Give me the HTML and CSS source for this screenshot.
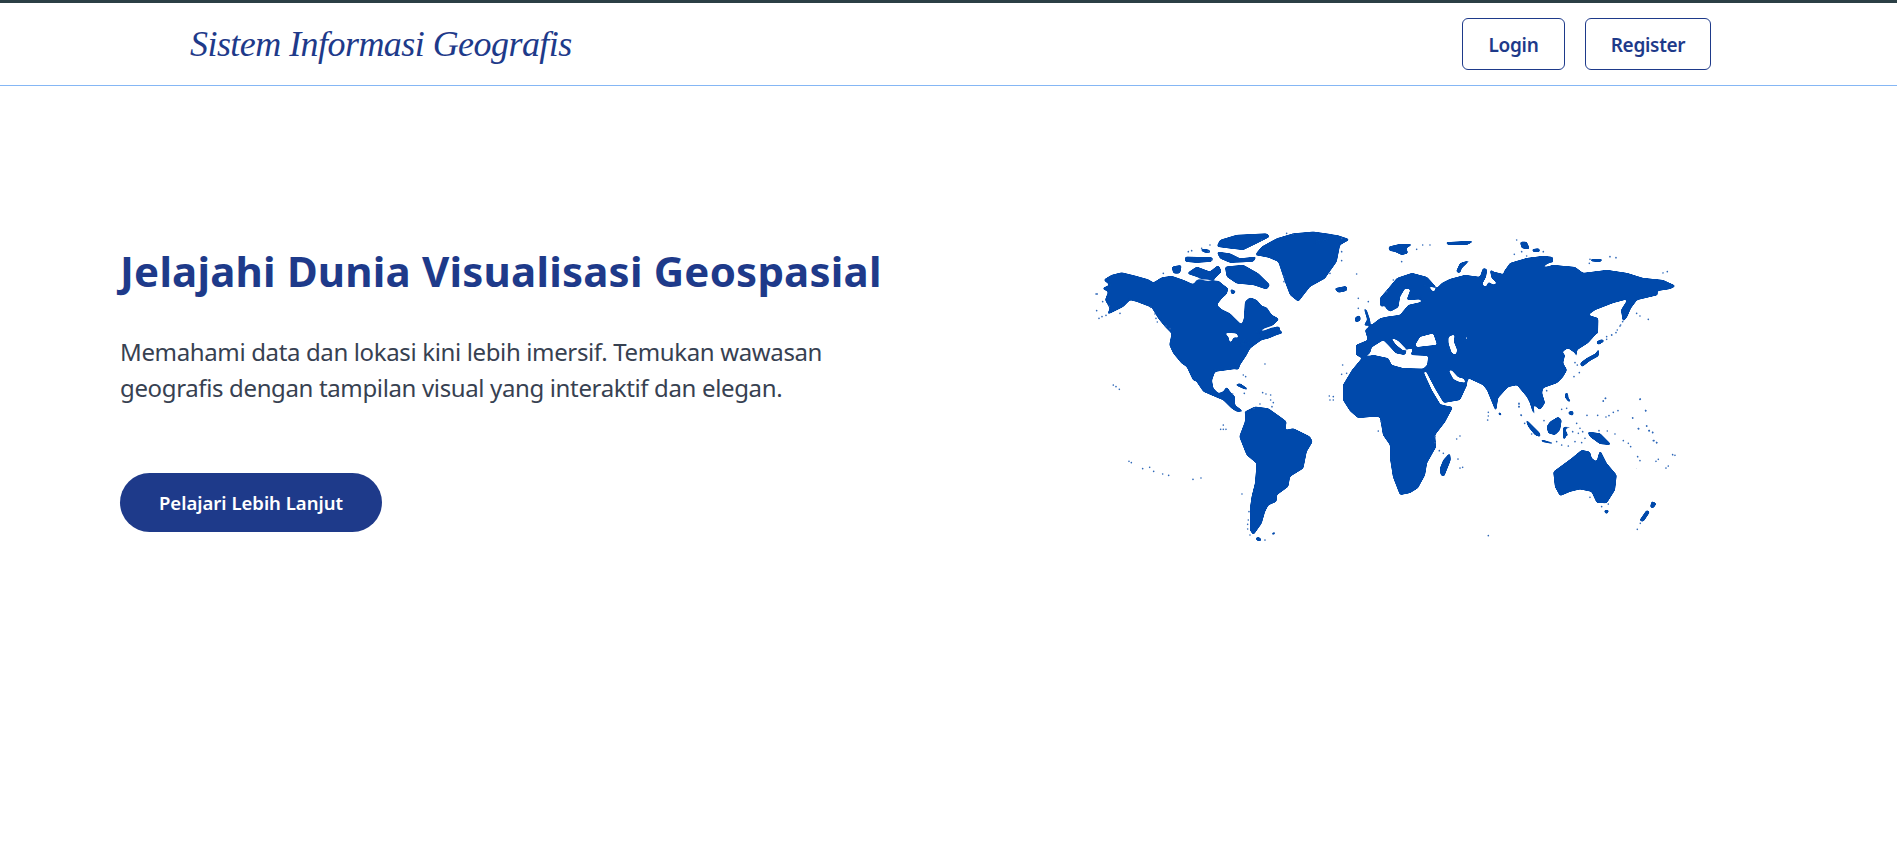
FILE: index.html
```html
<!DOCTYPE html>
<html lang="id">
<head>
<meta charset="utf-8">
<title>Sistem Informasi Geografis</title>
<link rel="stylesheet" href="styles.css">
</head>
<body>
<header class="navbar">
  <a class="brand" href="#">Sistem Informasi Geografis</a>
  <nav class="nav-actions">
    <a class="nav-btn" href="#">Login</a>
    <a class="nav-btn" href="#">Register</a>
  </nav>
</header>
<main class="hero">
  <section class="hero-copy">
    <h1 class="hero-title">Jelajahi Dunia Visualisasi Geospasial</h1>
    <p class="hero-text">Memahami data dan lokasi kini lebih imersif. Temukan wawasan geografis dengan tampilan visual yang interaktif dan elegan.</p>
    <a class="hero-btn" href="#">Pelajari Lebih Lanjut</a>
  </section>
  <svg class="world-map" viewBox="1090 225 600 325" role="img" aria-label="Peta dunia">
    <defs>
      <filter id="coast" x="1080" y="215" width="620" height="345" filterUnits="userSpaceOnUse">
        <feGaussianBlur stdDeviation="0.9"/>
        <feComponentTransfer><feFuncA type="linear" slope="6" intercept="-2.1"/></feComponentTransfer>
      </filter>
      <mask id="seas" maskUnits="userSpaceOnUse" x="1080" y="215" width="620" height="345">
        <rect class="mask-open" x="1080" y="215" width="620" height="345"/>
        <g transform="translate(1080 220) scale(.3333)">
          <path class="mask-cut" d="M432 338 470 340 478 355 462 352 450 372 445 350ZM470 377 500 360 503 363 475 378ZM705 65 770 45 745 58 710 68Z"/>
        </g>
        <g transform="translate(1320 290) scale(.3333)">
          <path class="mask-cut" d="M122 205 150 190 155 172 190 150 205 165 228 190 255 195 262 178 280 175 272 195 325 197 322 225 310 236 250 235 215 225 205 205 160 195ZM210 140 235 152 262 180 250 182 228 165ZM285 165 300 140 340 130 352 165 320 168 290 172ZM385 140 405 132 402 155 412 180 408 195 395 190 385 160ZM436 140 444 138 442 150 436 150ZM310 245 318 243 345 295 372 340 362 345 335 300ZM385 240 395 240 415 262 430 265 440 280 415 275 400 268Z"/>
        </g>
        <g transform="translate(1380 220) scale(.3333)">
          <path class="mask-cut" d="M75 205 92 208 80 240 120 238 128 245 85 255 60 285 20 290 15 262 30 275 55 262 60 230ZM135 195 170 205 160 217 150 205ZM305 195 318 170 322 145 330 150 335 175 352 190 340 195 325 185 320 200ZM335 150 365 150 375 165 360 160 340 155ZM485 140 515 125 520 135 495 142ZM0 265 15 255 22 290 0 295ZM655 290 661 290 660 345 654 345Z"/>
        </g>
      </mask>
    </defs>
    <g filter="url(#coast)">
      <g mask="url(#seas)">
        <!-- Afro-Eurasia, page coordinates -->
        <path class="land" d="M1362 358 1352 370 1343 385 1343 400 1350 411 1358 418 1370 417 1380 417 1383 435 1390 445 1390 458 1393 477 1400 495 1410 493 1418 488 1425 475 1427 463 1436 447 1435 435 1445 422 1453 407 1442 405 1443 403 1460 400 1467 385 1468 378 1483 385 1487 390 1496 412 1498 398 1508 387 1517 385 1527 397 1530 403 1532 410 1538 424 1535 415 1533 404 1540 410 1545 403 1542 393 1543 388 1557 383 1563 377 1567 370 1563 363 1565 355 1562 352 1568 348 1575 353 1577 359 1577 350 1588 343 1597 333 1600 337 1599 320 1598 318 1588 315 1595 310 1613 303 1628 299 1621 310 1623 322 1627 317 1631 308 1637 300 1658 295 1657 291 1670 289 1676 286 1663 280 1643 278 1627 273 1607 270 1583 273 1575 267 1553 265 1553 257 1543 256 1527 258 1510 263 1503 273 1497 270 1490 270 1483 268 1480 277 1465 275 1450 279 1442 283 1437 288 1427 277 1412 273 1397 278 1387 290 1380 298 1380 305 1387 313 1378 320 1365 330 1368 340 1356 345 1356 355Z"/>
        <!-- North America -->
        <g transform="translate(1080 220) scale(.3333)">
          <path class="land" d="M70 180 95 165 125 157 165 167 205 178 220 188 245 172 275 168 310 180 340 193 352 178 385 185 415 182 430 195 445 205 440 222 425 235 410 255 425 268 450 280 468 298 485 315 492 295 495 245 510 232 530 240 545 258 560 262 575 285 598 297 580 315 550 325 530 340 580 322 612 338 590 345 565 355 545 360 530 370 510 385 500 405 480 435 475 450 465 447 405 455 395 482 340 482 320 440 305 430 280 400 268 375 275 340 255 320 235 295 215 262 170 245 150 240 130 260 100 275 80 285 90 265 75 240 85 215 65 205 90 195Z"/>
          <path class="land" d="M525 105 545 80 590 55 640 40 700 35 770 45 810 58 780 75 770 125 745 160 735 175 690 200 655 245 630 225 615 185 595 125 565 112Z"/>
          <path class="land" d="M762 205 800 198 802 212 775 218ZM420 60 470 45 560 40 570 50 530 70 490 90 450 85 410 80ZM410 95 450 100 480 115 530 110 520 125 450 128 420 115ZM360 85 390 90 390 100 368 96ZM315 110 400 112 395 125 350 128 315 125ZM275 140 305 135 300 160 280 160ZM350 140 390 155 415 135 425 155 400 180 365 175 320 160ZM435 140 490 135 535 160 570 195 560 208 520 195 470 190 440 170ZM450 205 470 215 455 225ZM850 260 860 270 870 300 872 315 850 318 862 300ZM825 292 840 285 842 302 825 307ZM585 320 600 320 598 335 585 335Z"/>
        </g>
        <!-- Central and South America, Caribbean -->
        <g transform="translate(1080 380) scale(.3333)">
          <path class="land" d="M345 -2 395 -2 400 25 415 40 430 35 440 20 450 35 465 50 465 75 485 90 497 95 470 95 455 85 430 60 405 50 370 35Z"/>
          <path class="land" d="M495 95 525 80 565 85 600 110 620 125 615 150 640 145 690 170 698 185 680 215 670 265 630 290 625 320 590 345 590 365 565 375 555 395 545 430 520 465 510 450 510 385 515 350 525 310 530 250 500 225 478 170 495 125Z"/>
          <path class="land" d="M526 472 540 472 546 484 530 482ZM463 14 480 10 510 30 495 28ZM515 35 537 36 530 40ZM572 460 588 455 585 464 574 464ZM683 475 695 476 690 481Z"/>
        </g>
        <g transform="translate(1380 220) scale(.3333)">
          <path class="land" d="M228 155 240 130 300 110 265 125 245 145 240 160ZM25 80 60 72 100 72 78 85 85 100 65 105 45 95 28 92ZM195 67 285 62 260 75 205 75ZM420 65 440 65 450 88 425 85ZM455 88 478 85 480 96 460 96ZM630 118 672 118 660 126 632 124ZM835 158 860 155 850 162Z"/>
        </g>
        <!-- Indian Ocean and Oceania -->
        <g transform="translate(1380 380) scale(.3333)">
          <path class="land" d="M210 218 212 240 200 270 192 290 182 285 180 265 190 240ZM355 95 365 100 364 107 356 106ZM300 437 312 438 306 444Z"/>
          <path class="land" d="M520 275 575 235 605 210 630 215 635 235 650 245 660 210 680 250 710 285 705 330 680 370 650 368 635 335 600 328 570 335 540 348 525 320ZM672 390 688 390 682 402 675 400ZM805 350 818 365 830 370 820 385 810 382 815 365ZM800 390 810 395 790 425 778 422ZM764 262 776 265 770 270Z"/>
        </g>
        <g transform="translate(1500 320) scale(.3333)">
          <path class="land" d="M240 130 260 115 288 100 298 82 296 108 270 122 245 142ZM288 65 305 58 315 62 295 75ZM195 180 198 180 195 195 193 192ZM195 220 204 218 205 235 215 245 205 245 195 232ZM205 275 220 272 220 288 205 282ZM140 320 150 305 175 290 185 300 180 330 165 345 145 340ZM75 295 120 340 122 352 105 345 85 320ZM122 358 160 368 160 373 125 365ZM190 320 212 320 212 325 196 325 200 340 212 350 198 345 195 360 189 355ZM262 335 300 340 335 375 300 372 270 350Z"/>
        </g>
      </g>
    </g>
    <!-- Tiny islands -->
    <g transform="translate(1080 220) scale(.3333)">
      <path class="dots" d="M48 222h4M68 245h0M50 272h0M57 295h0M66 290h0M78 286h0M88 258h0M120 280h0M212 262h0M225 282h0M228 295h0M232 306h0M258 318h0M270 326h0M250 160h0M325 95h0M335 92h0M365 85h0M390 75h0M385 95h0M395 120h0M545 60h0M620 40h0M640 42h0M785 55h0M785 95h0M785 122h0M612 170h0M612 185h0M750 160h0M830 162h0M835 235h0M865 245h0M835 265h0M555 432h0M788 435h0M785 463h0M800 460h0M490 465h0M497 470h0"/>
    </g>
    <g transform="translate(1080 380) scale(.3333)">
      <path class="dots" d="M100 15h0M108 20h0M118 28h0M430 135h0M422 148h0M430 148h0M438 148h0M147 244h0M154 248h0M188 266h0M209 262h0M221 274h0M248 282h0M266 286h0M339 298h0M363 294h0M486 342h0M507 395h0M505 420h0M503 433h0M503 447h0M510 465h0M555 480h0M458 42h0M493 40h0M548 38h0M558 42h0M572 45h0M572 60h0M580 68h0M576 80h0M540 72h0M522 85h0M748 48h0M760 50h0M750 60h0M760 60h0M895 153h0"/>
    </g>
    <g transform="translate(1380 380) scale(.3333)">
      <path class="dots" d="M325 97h0M325 108h0M323 120h0M417 70h0M417 80h0M423 105h0M3 125h0M165 170h0M165 188h0M178 212h0M190 220h0M230 177h0M240 168h0M234 237h0M240 264h0M248 262h0M325 467h0M630 352h0M665 380h0M685 372h0M772 448h0M781 430h0M780 242h0M773 230h0M828 244h0M835 238h0M858 264h0M865 258h0M878 224h0M885 226h0M830 188h0M820 182h0M818 158h0M808 152h0M800 138h0M775 146h0M758 114h0M797 92h0M780 58h0M676 55h0M670 63h0"/>
    </g>
    <g transform="translate(1500 320) scale(.3333)">
      <path class="dots" d="M317 235h0M310 243h0M421 237h0M437 272h0M354 272h0M340 277h0M327 287h0M318 291h0M293 286h0M261 286h0M398 294h0M416 326h0M440 318h0M447 332h0M458 337h0M462 362h0M470 368h0M57 252h0M57 260h0M64 286h0M74 310h0M95 342h0M132 302h0M140 212h0M222 170h0M238 158h0M232 135h0M225 128h0M320 50h0M335 45h0M348 38h0M360 18h0M368 5h0M297 332h0M322 333h0M345 342h0M370 362h0M385 370h0M392 380h0M230 310h0M240 325h0M218 335h0M235 340h0M248 335h0M255 355h0M225 365h0M205 378h0M185 375h0M170 365h0M245 368h0M200 265h0M185 268h0"/>
    </g>
    <g transform="translate(1380 220) scale(.3333)">
      <path class="dots" d="M128 75h0M150 75h0M110 88h0M65 125h0M410 60h0M403 103h0M425 95h0M440 108h0M490 95h0M630 118h0M690 110h0M708 113h0M628 130h0M862 155h0M770 280h0M780 288h0M805 298h0M722 315h0M712 330h0M695 345h0M680 358h0M40 180h0M20 215h0"/>
    </g>
  </svg>
</main>
</body>
</html>
```

FILE: styles.css
```css
* { box-sizing: border-box; }

html, body {
  margin: 0;
  height: 100%;
  background: #fff;
}

body {
  font-family: "Noto Sans", "Open Sans", sans-serif;
  color: #374151;
  overflow: hidden;
}

a { text-decoration: none; }

.navbar {
  display: flex;
  align-items: center;
  justify-content: space-between;
  height: 86px;
  padding: 0 186px 0 190px;
  border-top: 3px solid #2b3f45;
  border-bottom: 1px solid #85b7f5;
}

.brand {
  font-family: "Liberation Serif", serif;
  font-style: italic;
  font-size: 36px;
  letter-spacing: -0.55px;
  color: #1e3a8a;
  white-space: nowrap;
}

.nav-actions {
  display: flex;
  gap: 20px;
}

.nav-btn {
  display: flex;
  align-items: center;
  justify-content: center;
  height: 52px;
  padding-top: 2px;
  border: 1px solid #1e3a8a;
  border-radius: 6px;
  color: #1e3a8a;
  font-size: 19px;
  font-weight: 600;
  letter-spacing: -0.3px;
}

.nav-btn:first-child { width: 103px; }
.nav-btn:last-child { width: 126px; }

.hero {
  display: grid;
  grid-template-columns: 970px 600px;
  align-items: center;
  padding: 139px 0 0 120px;
}

.hero-copy {
  display: flex;
  flex-direction: column;
  align-items: flex-start;
}

.hero-title {
  margin: 0 0 35px;
  font-size: 42px;
  line-height: 56px;
  font-weight: 700;
  letter-spacing: 0.2px;
  color: #1e3a8a;
  white-space: nowrap;
}

.hero-text {
  width: 730px;
  margin: 0 0 67px;
  font-size: 24px;
  line-height: 36px;
  letter-spacing: -0.36px;
  color: #374151;
}

.hero-btn {
  display: flex;
  align-items: center;
  justify-content: center;
  width: 262px;
  height: 59px;
  border-radius: 30px;
  background: #1e3a8a;
  color: #fff;
  font-size: 18.5px;
  font-weight: 600;
  letter-spacing: 0;
}

.world-map {
  display: block;
  width: 600px;
  height: 325px;
}

.land { fill: #034aab; }
.mask-open { fill: #fff; }
.mask-cut { fill: #000; }

.dots {
  fill: none;
  stroke: #2f68b8;
  stroke-width: 5;
  stroke-linecap: round;
}
```
